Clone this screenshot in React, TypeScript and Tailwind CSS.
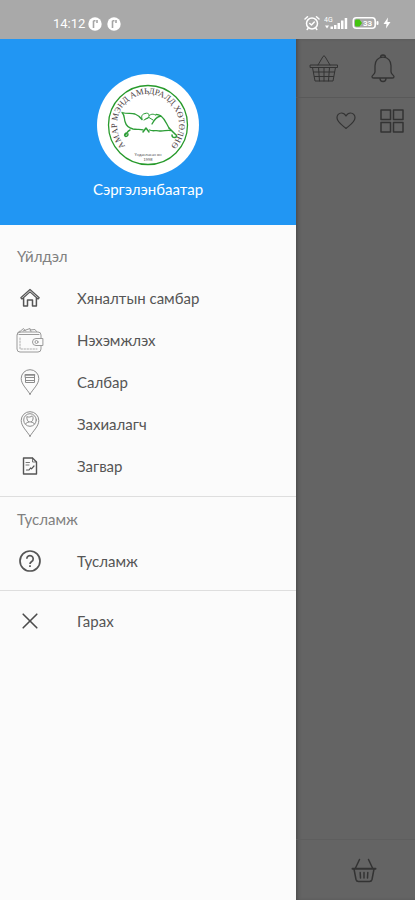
import type { ReactNode } from "react";

type IconProps = { children: ReactNode; className: string; box?: string };

function Icon({ children, className, box = "0 0 24 24" }: IconProps) {
  return (
    <svg
      viewBox={box}
      className={className}
      fill="none"
      stroke="currentColor"
      strokeLinecap="round"
      strokeLinejoin="round"
      aria-hidden="true"
    >
      {children}
    </svg>
  );
}

function HomeIcon() {
  return (
    <Icon className="size-5 text-[#555]" box="0 0 20 20">
      <path strokeWidth="1.2" d="M.8 9.800 10 1.500l9.200 8.300-1.200 1.200L10 3.900 2 11Z" />
      <path strokeWidth="1.5" d="M3.600 10.500V18h3.900v-6h5v6h3.900v-7.500" />
    </Icon>
  );
}

function WalletIcon() {
  return (
    <Icon className="h-[26px] w-7 text-[#9a9a9a]" box="0 0 28 26">
      <rect x="1" y="5" width="24" height="20" rx="3" />
      <path d="M1.500 7.500c0-2 1-3 3-3.500l3-2.500 2 2.500M7 4l7-2.500 1 3M14 3l5-.5 1.500 2M3 7.500h20" />
      <path fill="#fbfbfb" d="M26.500 11.500H20a3.500 3.500 0 0 0 0 7h6.500Z" />
      <circle cx="20.500" cy="15" r="1.500" />
      <path strokeDasharray="1.500 1.500" strokeWidth=".8" d="M4 11v11h17" />
    </Icon>
  );
}

function BranchIcon() {
  return (
    <Icon className="h-[26px] w-5 text-[#8c8c8c]" box="0 0 20 26">
      <path d="M10 25.300C7.500 20.500 1.200 15.500 1.200 9.500a8.800 8.800 0 0 1 17.600 0c0 6-6.300 11-8.800 15.800Z" />
      <path d="M5.500 5.500h9v3h-9ZM5.500 8.500v5h9v-5M5.500 11.500h9" />
      <path strokeWidth="1.600" d="M5.500 6h9" />
    </Icon>
  );
}

function CustomerIcon() {
  return (
    <Icon className="h-[26px] w-5 text-[#8c8c8c]" box="0 0 20 26">
      <path d="M10 25.300C7.500 20.500 1.200 15.500 1.200 9.500a8.800 8.800 0 0 1 17.600 0c0 6-6.300 11-8.800 15.800Z" />
      <circle cx="10" cy="9" r="6.300" />
      <path d="M7.200 5.800c1.500.6 3.800.3 5-1 .8.700 1 1.700.8 3.200-.3 2-1.500 3-3 3S7.300 10 7 8ZM5.500 13c1-1.500 2-1.800 3-1.800M14.500 13c-1-1.500-2-1.800-3-1.800" />
    </Icon>
  );
}

function TemplateIcon() {
  return (
    <Icon className="h-[18px] w-4 text-[#555]" box="0 0 16 18">
      <path strokeWidth="1.400" d="M1.500 1h9l4 4v12h-13Z" />
      <path strokeWidth=".8" d="M10.500 1v4h4M4 5.500h3.500M4 8h3" />
      <path strokeWidth="1.200" d="M4.500 13h2.500l1.500-2 1 .8L12 9" />
    </Icon>
  );
}

function HelpIcon() {
  return (
    <Icon className="size-[22px] text-[#555]" box="0 0 22 22">
      <circle cx="11" cy="11" r="10" strokeWidth="1.700" />
      <path strokeWidth="1.700" strokeLinecap="butt" d="M7.800 8.800a3.200 3.200 0 1 1 4.900 2.700C11.500 12.300 11 12.800 11 14" />
      <path strokeWidth="1.700" strokeLinecap="butt" d="M11 15.200V17" />
    </Icon>
  );
}

function CloseIcon() {
  return (
    <Icon className="size-4 text-[#4c4c4c]" box="0 0 16 16">
      <path strokeWidth="1.600" d="m1.200 1.200 13.600 13.600m0-13.600L1.200 14.800" />
    </Icon>
  );
}

function AppBadge() {
  return (
    <svg viewBox="0 0 14 14" className="size-[14px]" aria-hidden="true">
      <circle cx="7" cy="7" r="6.700" fill="#fff" />
      <path d="M5.500 11V3.800M5.500 3.800h2M9 3v3" fill="none" stroke="#a5a5a5" strokeWidth="1.600" />
    </svg>
  );
}

function StatusBar() {
  return (
    <header className="flex h-[39px] shrink-0 items-end justify-between bg-[#a9a9a9] pr-6 pb-2 pl-[53px] text-white">
      <div className="flex items-center">
        <span className="mr-[3px] font-['Roboto',sans-serif] text-[13px] leading-[14px]">14:12</span>
        <div className="flex gap-[5px]">
          <AppBadge />
          <AppBadge />
        </div>
      </div>
      <div className="flex items-center gap-1">
        <Icon className="size-4" box="0 0 16 16">
          <circle cx="8" cy="8.500" r="5.500" strokeWidth="1.500" />
          <path strokeWidth="1.500" d="M1 4 3.500 1.700M15 4l-2.500-2.300M5.800 8.500 7.500 10l2.800-3M4 13.500l-.8 1M12 13.500l.8 1" />
        </Icon>
        <svg viewBox="0 0 24 14" className="h-[14px] w-6" fill="#fff" aria-hidden="true">
          <text x="0" y="6" fontSize="7" fontFamily="Roboto, sans-serif">4G</text>
          <path d="M1 9.500h4l-2 3ZM6.500 10.500H9V13H6.500ZM10 9h2.500v4H10ZM13.500 7H16v6h-2.500ZM17 4.500h2.500V13H17ZM20.700 2h2.500v11h-2.500Z" />
        </svg>
        <svg viewBox="0 0 27 12" className="h-3 w-[27px]" aria-hidden="true">
          <rect x="1.300" y=".8" width="21.900" height="10.400" rx="3" fill="none" stroke="#fff" strokeWidth="1.600" />
          <rect x="24.500" y="4" width="2" height="4" rx="1" fill="#fff" />
          <path d="M4.500 2.500h3L10 6 7.500 9.500h-3A1.500 1.500 0 0 1 3 8V4a1.500 1.500 0 0 1 1.500-1.500Z" fill="#43c40f" />
          <text x="11" y="9" fontSize="8" fontWeight="700" fontFamily="Roboto, sans-serif" fill="#fff">33</text>
        </svg>
        <svg viewBox="0 0 8 12" className="h-3 w-2" fill="#fff" aria-hidden="true">
          <path d="M5 .5.500 7h3L3 11.500 7.500 5h-3Z" />
        </svg>
      </div>
    </header>
  );
}

function Logo() {
  return (
    <svg viewBox="0 0 102 102" className="size-[102px]" role="img" aria-label="Лого">
      <defs>
        <path id="motto" d="M29 72.800A31 31 0 1 1 73 72.800" />
      </defs>
      <circle cx="51" cy="51" r="51" fill="#fff" />
      <circle cx="51" cy="51" r="39.500" fill="none" stroke="#279a2b" strokeWidth="1.300" />
      <text fontSize="8.500" fontFamily="Liberation Serif, serif" fill="#4a3d42">
        <textPath href="#motto" startOffset="50%" textAnchor="middle">
          АМАР МЭНД АМЬДРАЛД ХӨТӨЛНӨ
        </textPath>
      </text>
      <g fill="none" stroke="#2e9e38" strokeLinecap="round" strokeLinejoin="round">
        <path strokeWidth="1.300" d="M25 38.500c5 1.500 9 .5 13 1.500 3 1 5 3 7 5.500M25 38.500c3 3 2 6 3 9 1 4 4 6.500 8 7.500 4 .8 7-.2 10 .8" />
        <path strokeWidth="1.500" d="M46 58l3-4 3 4M33 56c-3 1-3 4-5 5M30 59c-2 0-3 2-2 3s3 0 3-2" />
        <path strokeWidth="1" d="M45 45c-1-3 0-5 3-5.500M48 39.500c2-1 4 0 4.500 2 2-2 5-1.500 6.500 0M47 46l5-2.500 4 2.500M52 41.500c0 2-1 3-3 3" />
        <path strokeWidth="1.300" d="M55 50c2-4 5-7.500 9-8 4 3 5 7 8 12M52.500 56c3 1.500 6 .2 9 .8 4 .8 8-.8 12-.3M64 42c-3-1-4-2-5-1.500" />
        <path strokeWidth="1.500" d="M72 54l6 6M78 60c2 1 2 3 0 3.500s-3-1-3-2.500" />
      </g>
      <text x="51" y="82" fontSize="4" textAnchor="middle" fontFamily="Liberation Sans, sans-serif" fill="#444">
        Үндэслэсэн он
      </text>
      <text x="51" y="87" fontSize="4" textAnchor="middle" fontFamily="Liberation Sans, sans-serif" fill="#444">
        1998
      </text>
    </svg>
  );
}

function SectionTitle({ children }: { children: ReactNode }) {
  return <h2 className="mb-[10px] px-[17px] text-[15px] leading-[22px] text-[#808080]">{children}</h2>;
}

function MenuItem({ icon, label }: { icon: ReactNode; label: string }) {
  return (
    <li>
      <a href="#" className="flex h-[42px] items-center text-[15px] leading-[22px] text-[#555]">
        <span className="flex w-[60px] justify-center">{icon}</span>
        <span className="pl-[17px]">{label}</span>
      </a>
    </li>
  );
}

const actions = [
  { label: "Хяналтын самбар", icon: <HomeIcon /> },
  { label: "Нэхэмжлэх", icon: <WalletIcon /> },
  { label: "Салбар", icon: <BranchIcon /> },
  { label: "Захиалагч", icon: <CustomerIcon /> },
  { label: "Загвар", icon: <TemplateIcon /> },
];

function Drawer() {
  return (
    <aside className="w-[296px] shrink-0 bg-[#fbfbfb]">
      <div className="flex h-[186px] flex-col items-center bg-[#2196f3] pt-[35px]">
        <Logo />
        <p className="mt-[2px] text-[15px] leading-[22px] text-white">Сэргэлэнбаатар</p>
      </div>
      <nav>
        <section className="border-b border-[#dedede] pt-5 pb-[9px]">
          <SectionTitle>Үйлдэл</SectionTitle>
          <ul>
            {actions.map((item) => (
              <MenuItem key={item.label} icon={item.icon} label={item.label} />
            ))}
          </ul>
        </section>
        <section className="border-b border-[#dedede] pt-[11px] pb-2">
          <SectionTitle>Тусламж</SectionTitle>
          <ul>
            <MenuItem icon={<HelpIcon />} label="Тусламж" />
          </ul>
        </section>
        <ul className="pt-[9px]">
          <MenuItem icon={<CloseIcon />} label="Гарах" />
        </ul>
      </nav>
    </aside>
  );
}

function DimmedPage() {
  return (
    <main className="flex min-w-0 flex-1 flex-col bg-[#646464] text-[#333] shadow-[inset_3px_0_4px_-2px_#444]">
      <div className="flex h-[59px] items-center justify-end gap-8 border-b border-[#595959] pr-5">
        <button type="button" aria-label="Сагс">
          <Icon className="h-7 w-[30px]" box="0 0 30 28">
            <path d="M1.500 11h27v2.500h-27ZM9 11l5-8.500q1-1.500 2 0l5 8.500M3.500 13.500 6 27h18l2.500-13.500M4.500 18h21M5.500 22.500h19M9.500 13.500l1 13.500M15 13.500V27M20.500 13.500l-1 13.500" />
          </Icon>
        </button>
        <button type="button" aria-label="Мэдэгдэл">
          <Icon className="h-[29px] w-6" box="0 0 24 29">
            <path strokeWidth="1.300" d="M9.500 3.500a2.500 2.500 0 0 1 5 0M12 3.200c-5 0-8 3.600-8 8.500v6c0 2.500-3 3.500-3 5 0 1 .8 1.300 1.800 1.300h18.400c1 0 1.800-.3 1.800-1.300 0-1.500-3-2.500-3-5v-6c0-4.900-3-8.500-8-8.500ZM9 24.500a3 3 0 0 0 6 0" />
          </Icon>
        </button>
      </div>
      <div className="flex h-[46px] items-center justify-end gap-6 pr-[11px]">
        <button type="button" aria-label="Дуртай">
          <Icon className="h-[18px] w-5" box="0 0 20 18">
            <path strokeWidth="1.200" d="M10 16.500C6 13 1 9.800 1 5.700A4.500 4.500 0 0 1 5.500 1C7.700 1 9 2.300 10 4c1-1.700 2.300-3 4.500-3A4.500 4.500 0 0 1 19 5.700c0 4.100-5 7.300-9 10.800Z" />
          </Icon>
        </button>
        <button type="button" aria-label="Ангилал">
          <Icon className="size-6" box="0 0 24 24">
            <path strokeWidth="1.500" d="M1 1h9.500v9.500H1ZM13.500 1H23v9.500h-9.500ZM1 13.500h9.500V23H1ZM13.500 13.500H23V23h-9.500Z" />
          </Icon>
        </button>
      </div>
      <div className="mt-auto flex h-[61px] items-center justify-center border-t border-[#5e5e5e] pl-4">
        <button type="button" aria-label="Захиалга">
          <Icon className="h-[25px] w-[26px]" box="0 0 26 25">
            <path strokeWidth="1.500" d="M3 11l2 10.500q.5 2 2.500 2h11q2 0 2.500-2L23 11M4.500 10l4-8.500M21.500 10l-4-8.500M9.200 14.500l.3 5.500M13 14.500V20M16.800 14.500l-.3 5.500" />
            <path strokeWidth="2" d="M1.500 10.700h23" />
          </Icon>
        </button>
      </div>
    </main>
  );
}

export default function App() {
  return (
    <div className="flex min-h-screen flex-col font-['Lato','Noto_Sans',sans-serif]">
      <StatusBar />
      <div className="flex flex-1">
        <Drawer />
        <DimmedPage />
      </div>
    </div>
  );
}
